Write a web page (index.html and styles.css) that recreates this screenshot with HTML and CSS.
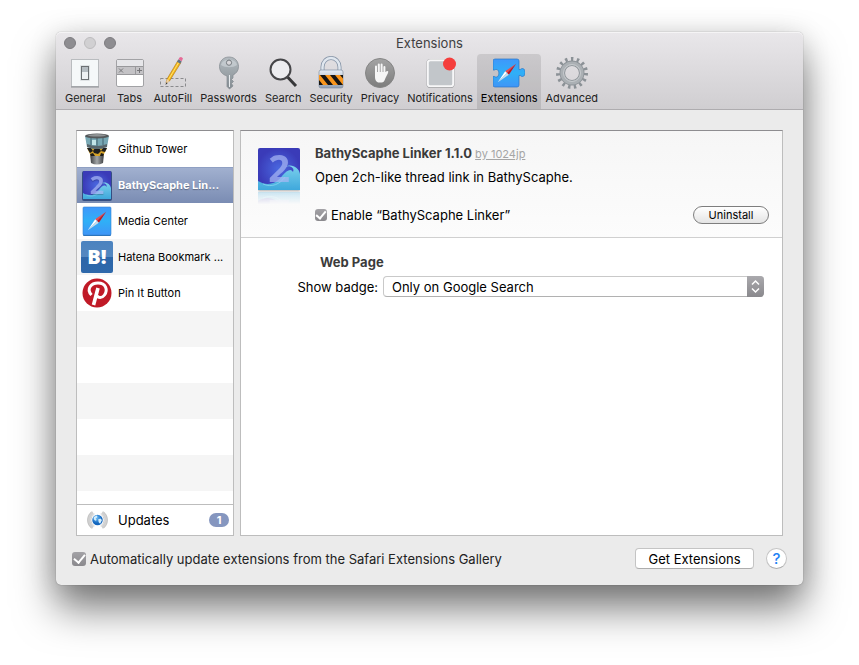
FILE: index.html
```html
<!DOCTYPE html>
<html lang="en">
<head>
<meta charset="utf-8">
<title>Extensions</title>
<link rel="stylesheet" href="styles.css">
</head>
<body>
<svg class="defs" aria-hidden="true">
  <defs>
    <linearGradient id="blue" x1="0" y1="0" x2="0" y2="1"><stop offset="0" stop-color="#3f97fb"/><stop offset=".5" stop-color="#2fb0f7"/><stop offset="1" stop-color="#3f95f7"/></linearGradient>
    <linearGradient id="silver" x1="0" y1="0" x2="0" y2="1"><stop offset="0" stop-color="#b4bbc0"/><stop offset="1" stop-color="#848c92"/></linearGradient>
    <linearGradient id="steel" x1="0" y1="0" x2="0" y2="1"><stop offset="0" stop-color="#e6edf5"/><stop offset="1" stop-color="#92a0b3"/></linearGradient>
    <linearGradient id="grey" x1="0" y1="0" x2="0" y2="1"><stop offset="0" stop-color="#a4a4a4"/><stop offset="1" stop-color="#7d7d7d"/></linearGradient>
    <linearGradient id="wave" x1="0" y1="0" x2="0" y2="1"><stop offset="0" stop-color="#7bd0ec"/><stop offset="1" stop-color="#3fa8dc"/></linearGradient>
    <radialGradient id="deep"><stop offset="0" stop-color="#4a68e0"/><stop offset="1" stop-color="#3a3bb8"/></radialGradient>
    <linearGradient id="hatena" x1="0" y1="0" x2="0" y2="1"><stop offset="0" stop-color="#4a82bf"/><stop offset=".5" stop-color="#5488c0"/><stop offset=".5" stop-color="#2c66a9"/><stop offset="1" stop-color="#2f69ab"/></linearGradient>
    <linearGradient id="tower" x1="0" y1="0" x2="1" y2="0"><stop offset="0" stop-color="#3b3d3f"/><stop offset=".5" stop-color="#a3a6a8"/><stop offset="1" stop-color="#3b3d3f"/></linearGradient>
    <radialGradient id="globe" cx=".4" cy=".3"><stop offset="0" stop-color="#6fc0fb"/><stop offset="1" stop-color="#1265bd"/></radialGradient>
    <symbol id="bathy" viewBox="0 0 42 42">
      <rect width="42" height="42" rx="2" fill="url(#deep)"/>
      <path d="M0 33C10 39 19 35 24 28C29 22 33 20 35 24C37 20 32 17 27 19C33 15 41 19 42 26V42H0Z" fill="url(#wave)"/>
      <path d="M5 36C14 40 22 36 27 29" fill="none" stroke="#8fdcf2" opacity=".7"/>
      <text x="21" y="34" class="two">2</text>
    </symbol>
    <symbol id="needle" viewBox="0 0 24 24">
      <path d="M22 2L10 10L12 12Z" fill="#f04a4a"/><path d="M22 2L12 12L14 14Z" fill="#c4151c"/>
      <path d="M2 22L10 10L12 12Z" fill="#fff"/><path d="M2 22L12 12L14 14Z" fill="#c9dce8"/>
    </symbol>
  </defs>
</svg>

<main class="window">
  <header class="chrome">
    <div class="titlebar">
      <div class="lights"><i></i><i class="off"></i><i></i></div>
      <h1>Extensions</h1>
    </div>
    <nav class="toolbar" aria-label="Preferences">
      <button type="button"><svg viewBox="0 0 32 36"><rect x="2.500" y="4.500" width="27" height="27" fill="#f5f8f9" stroke="#b9bcbf"/><path d="M2 32H30" stroke="#8c8f92"/><rect x="11" y="10" width="10" height="16" rx="1" fill="#dfe3e5"/><rect x="12.500" y="11.500" width="7" height="13" fill="#b5bcc1" stroke="#6c7073"/><rect x="13" y="17" width="6" height="7" fill="#eef1f3"/></svg>General</button>
      <button type="button"><svg viewBox="0 0 32 36"><rect x="2.500" y="4.500" width="27" height="27" rx="1.500" fill="#fff" stroke="#a2a2a5"/><path d="M3 5H29V12H3Z" fill="#e6e6e9"/><path d="M3 12H29V19.500H3Z" fill="#c4c3c6"/><path d="M3 11.500H29M3 19.500H29M21.500 12V19" stroke="#98989b"/><path d="M5 13.500L9 17.500M9 13.500L5 17.500M23 15.500H28M25.500 13V18" stroke="#77777a"/></svg>Tabs</button>
      <button type="button"><svg viewBox="0 0 32 36"><path d="M3.500 23.500H28.500V31.500H3.500Z" fill="none" stroke="#8a8a8d" stroke-dasharray="3 2"/><path d="M9 28L10 24L21 5.500L24 7.500L12.500 26Z" fill="#f5b717" stroke="#a87318" stroke-width=".6"/><path d="M11.500 24.500L22 7" stroke="#ffe071"/><path d="M8.800 29L10 24L12.500 26Z" fill="#edcfa5"/><path d="M8.500 30L9.200 27.500L10.700 28Z" fill="#333"/><path d="M20 6.800L21.500 4.300L24.700 6.300L23.200 8.700Z" fill="#637386"/><path d="M21.500 4.300L22.500 2.500Q24.500 1 26 3.500L24.700 6.300Z" fill="#e66b97"/></svg>AutoFill</button>
      <button type="button"><svg viewBox="0 0 32 36"><path fill="url(#silver)" stroke="#83898f" stroke-width=".7" fill-rule="evenodd" d="M16 2C22 2 25.500 6.500 25.500 11.500C25.500 16 23 18.500 20 20V23L18.500 24.500L20.500 26.500L18.500 28.500L20 31L16.500 34L14 31.500V21C9 19.500 6.500 16 6.500 11.500C6.500 6.500 10 2 16 2ZM16 5A2.700 2.700 0 1 0 16 10.400A2.700 2.700 0 1 0 16 5Z"/><path d="M8 10C9 3 23 3 24 10C20 13 12 13 8 10Z" fill="#d9e0e4" opacity=".5"/><path d="M16.500 20V32" stroke="#e8ecef"/><circle cx="16" cy="7.700" r="2.600" fill="#d8d7da" stroke="#777d82"/></svg>Passwords</button>
      <button type="button"><svg viewBox="0 0 32 36"><path d="M20.500 22L29 31" stroke="#373739" stroke-width="3"/><circle cx="13.500" cy="14.500" r="10" fill="#ececef" stroke="#464649" stroke-width="2"/></svg>Search</button>
      <button type="button"><svg viewBox="0 0 32 36"><path d="M7.500 17V12A8.500 9 0 0 1 24.500 12V17" fill="none" stroke="#8896a8" stroke-width="4"/><path d="M7.500 17V12A8.500 9 0 0 1 24.500 12V17" fill="none" stroke="#e0e7ef" stroke-width="2.400"/><rect x="4" y="15" width="24" height="18" rx="2" fill="url(#steel)" stroke="#77869a" stroke-width=".6"/><path d="M4 20H28V30H4Z" fill="#f8951c"/><path d="M5 20H10L18 30H13ZM15 20H20L28 30H23ZM4 25L8 30H4ZM25 20H28V23.500Z" fill="#151515"/></svg>Security</button>
      <button type="button"><svg viewBox="0 0 32 36"><circle cx="16" cy="18" r="14.500" fill="url(#grey)" stroke="#858585"/><path d="M12 19V11.500M14.800 18V9.500M17.600 18V9.500M20.400 19V12" stroke="#f6f6f6" stroke-width="2" stroke-linecap="round"/><path d="M11 17H21.400L23 16Q25 15.500 24 18L21.500 23C20.500 26 19.500 27.500 17.500 27.500H15C12.500 27.500 11 25 11 22Z" fill="#f6f6f6"/></svg>Privacy</button>
      <button type="button"><svg viewBox="0 0 32 36"><rect x="3.500" y="5" width="26" height="27" rx="3" fill="#c2c6ca" stroke="#98989b" stroke-width="2"/><rect x="3.800" y="5.200" width="25.400" height="26" rx="2.500" fill="#c2c6ca" stroke="#f7f7f8" stroke-width="2"/><circle cx="25.500" cy="9" r="6.500" fill="#f53e3c"/></svg>Notifications</button>
      <button type="button" class="current" aria-current="page"><svg viewBox="0 0 32 36"><path d="M2 4H24Q26 4 26 6V14.500C28 15 27.500 13.500 29.500 13.500C33 13.500 33 21.500 29.500 21.500C27.500 21.500 28 20 26 20.500V30Q26 32 24 32H2Q0 32 0 30V21.500C2 21 2 22.500 4 22C6.500 20.500 6.500 15.500 4 14.500C2 14 2 15.500 0 15V6Q0 4 2 4Z" fill="url(#blue)" stroke="#2876c5" stroke-width=".7"/><use href="#needle" x="3" y="7" width="22" height="22"/></svg>Extensions</button>
      <button type="button"><svg viewBox="0 0 32 36"><g fill="none" stroke="#8b9196"><circle cx="16" cy="18" r="14" stroke-width="4" stroke-dasharray="2.400 3.464"/><circle cx="16" cy="18" r="9.700" stroke="#8b9196" stroke-width="5.500"/><circle cx="16" cy="18" r="9.700" stroke="#abb0b4" stroke-width="3.800"/><circle cx="16" cy="18" r="8.500" stroke="#c6cacd"/></g></svg>Advanced</button>
    </nav>
  </header>

  <div class="panes">
    <aside class="sidebar">
      <ul class="list">
        <li><button type="button"><svg viewBox="0 0 32 32"><path d="M9 21H23L22 30Q16 33 10 30Z" fill="url(#tower)"/><path d="M6 15H26L22 23H10Z" fill="#d6a329"/><path d="M6 15H10L12 18L9 20ZM14 15H18L20 18L17 21L13 20L12 18ZM22 15H26L24 19L20 18ZM9 21L12 20L14 23H10ZM19 23L20 20L23 21L22 23Z" fill="#1d1d1d"/><path d="M4 3H28L26 14Q16 18 6 14Z" fill="#78a8b4"/><path d="M6 11Q16 15 26 11V14Q16 18 6 14Z" fill="#59666c"/><path d="M10 5V12M16 5V13M22 5V12" stroke="#456570"/><path d="M11 7H15V12H11Z" fill="#c3e5e8"/><ellipse cx="16" cy="3" rx="12" ry="2.600" fill="#55585a"/><ellipse cx="16" cy="2.300" rx="9" ry="1.300" fill="#919496"/></svg><span>Github Tower</span></button></li>
        <li><button type="button" class="current" aria-current="true"><svg viewBox="0 0 32 32"><rect x="1" y="2" width="30" height="30" rx="2" fill="#344e83"/><use href="#bathy" x="2" y="2" width="28" height="28"/></svg><span>BathyScaphe Lin...</span></button></li>
        <li><button type="button"><svg viewBox="0 0 32 32"><rect x="2" y="3" width="28" height="28" rx="1" fill="#2870b4"/><rect x="2" y="2" width="28" height="28" rx="1" fill="url(#blue)" stroke="#3784d0" stroke-width=".6"/><use href="#needle" x="5" y="5" width="22" height="22"/></svg><span>Media Center</span></button></li>
        <li><button type="button"><svg viewBox="0 0 32 32"><rect width="32" height="32" rx="2" fill="url(#hatena)"/><text x="16" y="23" class="b-mark">B!</text></svg><span>Hatena Bookmark ...</span></button></li>
        <li><button type="button"><svg viewBox="0 0 32 32"><circle cx="16" cy="16" r="14.500" fill="#c01a27"/><path d="M10.500 18C5 12 10 6 17 6C25 6 27 13 23.500 18C21 21.500 17 21 16 18.500" fill="none" stroke="#fff" stroke-width="3"/><path d="M17 11L12.500 28" stroke="#fff" stroke-width="3.600"/></svg><span>Pin It Button</span></button></li>
      </ul>
      <button type="button" class="updates">
        <svg viewBox="0 0 32 32"><g fill="none" stroke="#d0d0d0" stroke-width="4"><path d="M10 6A12 12 0 0 0 10 26M22 6A12 12 0 0 1 22 26"/><path d="M8 5A14 14 0 0 0 8 27M12 8A9 9 0 0 0 12 24M24 5A14 14 0 0 1 24 27M20 8A9 9 0 0 1 20 24" stroke="#b2b2b2" stroke-width=".8"/></g><circle cx="16" cy="16" r="7" fill="url(#globe)"/><path d="M11 12L15 10L16 12L13.500 14L15 16L13 17L11 15ZM17 15L20 14L22 16L19.500 21L17.500 19Z" fill="#d3eefc"/></svg>
        <span>Updates</span><b>1</b>
      </button>
    </aside>

    <section class="detail">
      <div class="summary">
        <div class="art">
          <svg class="cover" viewBox="0 0 42 42"><use href="#bathy" width="42" height="42"/></svg>
          <svg class="mirror" viewBox="0 0 42 42"><use href="#bathy" width="42" height="42"/></svg>
        </div>
        <div class="about">
          <h2>BathyScaphe Linker 1.1.0 <a href="#author">by 1024jp</a></h2>
          <p>Open 2ch-like thread link in BathyScaphe.</p>
          <div class="actions">
            <label><input type="checkbox" class="small" checked>Enable “BathyScaphe Linker”</label>
            <button type="button" class="pill">Uninstall</button>
          </div>
        </div>
      </div>
      <div class="settings">
        <h3>Web Page</h3>
        <div class="field">
          <label for="badge">Show badge:</label>
          <div class="popup">
            <select id="badge"><option>Only on Google Search</option></select>
            <svg viewBox="0 0 17 21" aria-hidden="true"><path d="M5 8.500L8.500 5L12 8.500M5 12.500L8.500 16L12 12.500" fill="none" stroke="#fff" stroke-width="1.500"/></svg>
          </div>
        </div>
      </div>
    </section>
  </div>

  <footer>
    <label><input type="checkbox" checked>Automatically update extensions from the Safari Extensions Gallery</label>
    <button type="button" class="get">Get Extensions</button>
    <button type="button" class="help" aria-label="Help">?</button>
  </footer>
</main>
</body>
</html>
```
FILE: styles.css
```css
* { box-sizing: border-box; }
body {
  margin: 0;
  min-height: 100vh;
  padding: 32px 56px 80px;
  display: flex;
  background: #fff;
  color: #000;
  font: 13px/16px Inter, "Liberation Sans", sans-serif;
}
h1, h2, h3, p, ul { margin: 0; padding: 0; }
h1, h2, h3 { font-size: 13px; line-height: 16px; }
button, select { font: inherit; color: inherit; margin: 0; cursor: default; }
svg { display: block; }
.defs { position: absolute; width: 0; height: 0; }

.window {
  flex: 1;
  min-width: 0;
  display: flex;
  flex-direction: column;
  background: #ebebeb;
  border-radius: 5px;
  box-shadow: 0 0 1px rgba(0, 0, 0, .5), 0 24px 40px rgba(0, 0, 0, .5), 0 4px 28px rgba(0, 0, 0, .15);
}

/* Title bar and toolbar */
.chrome {
  border-radius: 5px 5px 0 0;
  background: linear-gradient(#e9e7ea, #d0ced1);
  border-bottom: 1px solid #aeacaf;
  box-shadow: inset 0 1px #f5f4f5;
}
.titlebar {
  display: grid;
  grid-template-columns: 1fr auto 1fr;
  align-items: center;
  height: 22px;
  padding: 0 8px;
}
.titlebar h1 { font-weight: 400; color: #403f41; }
.lights { display: flex; gap: 8px; }
.lights i {
  width: 12px;
  height: 12px;
  border-radius: 50%;
  background: #8e8d91;
  border: 1px solid #7d7c80;
}
.lights .off { background: #d1d0d2; border-color: #bdbcbe; }
.toolbar { display: flex; padding: 0 5px; }
.toolbar button {
  display: flex;
  flex-direction: column;
  align-items: center;
  height: 55px;
  padding: 1px 4px 0;
  border: 0;
  border-radius: 4px 4px 0 0;
  background: none;
  color: #222;
  font-size: 11px;
  line-height: 14px;
}
.toolbar svg { width: 32px; height: 36px; }
.toolbar .current { background: rgba(0, 0, 0, .1); color: #000; }

/* Panes */
.panes {
  flex: 1;
  display: grid;
  grid-template-columns: 158px 1fr;
  gap: 6px;
  padding: 20px 20px 0;
}
.sidebar, .detail {
  display: flex;
  flex-direction: column;
  min-width: 0;
  background: #fff;
  border: 1px solid #bdbdbd;
  border-top-color: #8e8d90;
}
.list {
  flex: 1;
  list-style: none;
  background: repeating-linear-gradient(#fff 0 36px, #f5f5f5 36px 72px);
}
.list button, .updates {
  display: flex;
  align-items: center;
  width: 100%;
  gap: 5px;
  border: 0;
  background: none;
  text-align: left;
}
.list button { height: 36px; padding: 0 4px; font-size: 11px; }
.list svg { flex: none; width: 32px; height: 32px; }
.list span { white-space: nowrap; }
.list .current {
  background: linear-gradient(#a2b1d0, #7a8cb3);
  box-shadow: inset 0 1px #8fa0c3;
  color: #fff;
  font-weight: 700;
  text-shadow: 0 1px 1px rgba(0, 0, 0, .3);
}
.updates { height: 31px; padding: 0 4px 0 5px; border-top: 1px solid #bdbdbd; }
.updates svg { flex: none; width: 31px; height: 24px; }
.updates span { flex: 1; }
.updates b {
  width: 20px;
  border-radius: 7px;
  background: #8596bf;
  color: #fff;
  font-size: 11px;
  line-height: 14px;
  text-align: center;
}
.two { font: 700 38px "Open Sans", sans-serif; text-anchor: middle; fill: #a9b8f4; opacity: .7; }
.b-mark { font: 800 20px "Open Sans", sans-serif; text-anchor: middle; fill: #fff; }

/* Extension detail */
.summary {
  display: flex;
  gap: 15px;
  padding: 14px 13px 13px 17px;
  background: linear-gradient(#f6f6f6, #fcfcfc);
  border-bottom: 1px solid #d0d0d0;
}
.art { flex: none; width: 42px; height: 56px; margin-top: 3px; overflow: hidden; }
.art svg { width: 42px; height: 42px; }
.cover { filter: drop-shadow(0 1px 1px rgba(0, 0, 0, .3)); }
.art .mirror { margin-top: 2px; transform: scaleY(-1); opacity: .25; mask-image: linear-gradient(transparent 70%, #000); }
.about { flex: 1; }
h2 { color: #3b3b3b; }
h2 a { color: #a5a5a5; font-size: 11px; font-weight: 400; }
.about p { margin-top: 7px; }
.actions {
  display: flex;
  align-items: center;
  justify-content: space-between;
  margin-top: 21px;
}
label { display: flex; align-items: center; gap: 4px; }
input {
  appearance: none;
  display: grid;
  place-items: center;
  width: 14px;
  height: 14px;
  margin: 0;
  border-radius: 3px;
  background: linear-gradient(#a3a2a6, #8a898d);
}
input:checked::before {
  content: "";
  width: 5px;
  height: 9px;
  margin-bottom: 2px;
  border: solid #fff;
  border-width: 0 2px 2px 0;
  transform: rotate(40deg);
}
.small { width: 12px; height: 12px; }
.small:checked::before { width: 4px; height: 8px; }
.pill {
  width: 76px;
  height: 18px;
  padding: 0;
  border: 1px solid #7e7e7e;
  border-radius: 9px;
  background: linear-gradient(#fff, #e4e4e4);
  font-size: 11px;
  line-height: 14px;
}
.settings { padding: 16px 18px; }
h3 { padding-left: 61px; color: #3b3b3b; }
.field {
  display: grid;
  grid-template-columns: 119px 1fr;
  align-items: center;
  gap: 5px;
  margin-top: 6px;
}
.field label { justify-content: flex-end; }
.popup { position: relative; }
select {
  display: block;
  appearance: none;
  width: 100%;
  height: 21px;
  padding: 0 24px 0 8px;
  border: 1px solid #c9c9c9;
  border-bottom-color: #b1b1b1;
  border-radius: 4px;
  background: #fff;
}
.popup svg {
  position: absolute;
  top: 0;
  right: 0;
  width: 17px;
  height: 21px;
  border-radius: 0 4px 4px 0;
  background: linear-gradient(#aaa9ad, #8a898d);
  pointer-events: none;
}

/* Bottom bar */
footer {
  display: flex;
  align-items: center;
  gap: 12px;
  padding: 12px 16px 16px;
}
footer label { flex: 1; color: #222; }
.get, .help {
  height: 21px;
  padding: 0;
  border: 1px solid #c4c4c4;
  border-bottom-color: #adadad;
  background: #fff;
}
.get { width: 119px; border-radius: 4px; }
.help { width: 21px; border-radius: 50%; color: #1f82f5; font-size: 15px; line-height: 18px; font-weight: 500; }
```
